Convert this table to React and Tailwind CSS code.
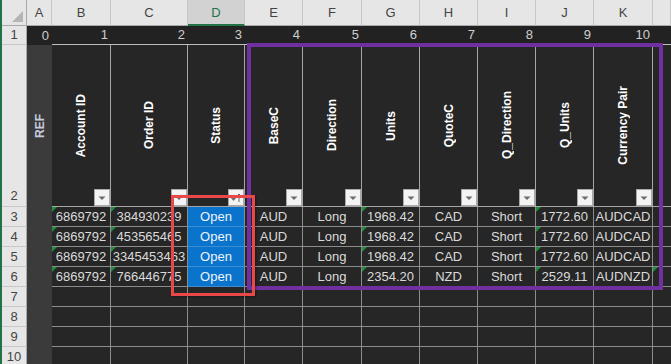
import React from "react";

const LETTERS = ["A", "B", "C", "D", "E", "F", "G", "H", "I", "J", "K", ""];
const HEADS = ["Account ID", "Order ID", "Status", "BaseC", "Direction", "Units", "QuoteC", "Q_Direction", "Q_Units", "Currency Pair"];
const ROWS = [
  ["6869792", "384930239", "Open", "AUD", "Long", "1968.42", "CAD", "Short", "1772.60", "AUDCAD"],
  ["6869792", "453565465", "Open", "AUD", "Long", "1968.42", "CAD", "Short", "1772.60", "AUDCAD"],
  ["6869792", "3345453463", "Open", "AUD", "Long", "1968.42", "CAD", "Short", "1772.60", "AUDCAD"],
  ["6869792", "766446775", "Open", "AUD", "Long", "2354.20", "NZD", "Short", "2529.11", "AUDNZD"],
];
// columns (index into B..K) that carry the green "number stored as text" marker
const FLAGGED = [0, 1, 5, 8];

function Flag() {
  return <span className="absolute left-0 top-0 h-0 w-0 border-t-[5px] border-r-[5px] border-t-[#1f8f3c] border-r-transparent" />;
}

function FilterBtn({ sorted }) {
  return (
    <div className="absolute bottom-0 right-0 h-[17px] w-[16px] border border-[#a9a9a9] bg-[#f3f3f3]">
      <svg width="14" height="15" viewBox="0 0 14 15">
        {sorted ? (
          <>
            <polygon points="2,8 7,8 4.5,11" fill="#6b6b6b" />
            <line x1="10" y1="4" x2="10" y2="12" stroke="#6b6b6b" strokeWidth="1" />
            <polyline points="8.2,6 10,4 11.8,6" fill="none" stroke="#6b6b6b" strokeWidth="1" />
          </>
        ) : (
          <polygon points="3.5,6.5 10.5,6.5 7,10" fill="#6b6b6b" />
        )}
      </svg>
    </div>
  );
}

function RowHead({ n, bottom }) {
  return (
    <div className={`flex justify-center border-b border-r border-b-[#c8c8c8] border-r-[#a9a9a9] bg-[#e6e6e6] text-[13px] text-[#444] ${bottom ? "items-end pb-[1px]" : "items-center"}`}>
      {n}
    </div>
  );
}

export default function App() {
  return (
    <div className="relative h-[364px] w-[671px] overflow-hidden border-l-2 border-[#217346] bg-[#262626] font-['Liberation_Sans',Arial,sans-serif]">
      <div className="grid grid-cols-[25px_25px_59px_77px_57px_58px_59px_58px_58px_58px_58px_59px_18px] grid-rows-[26px_19px_162px_repeat(8,20px)]">
        {/* column letters */}
        <div className="relative border-b border-r border-[#a9a9a9] bg-[#e6e6e6]">
          <span className="absolute bottom-[3px] right-[3px] h-0 w-0 border-b-[11px] border-l-[11px] border-b-[#b5b5b5] border-l-transparent" />
        </div>
        {LETTERS.map((l, i) =>
          l === "D" ? (
            <div key={i} className="flex items-center justify-center border-b-2 border-r border-b-[#217346] border-r-[#c8c8c8] bg-[#d2d2d2] pt-[2px] text-[13px] text-[#217346]">
              {l}
            </div>
          ) : (
            <div key={i} className="flex items-center justify-center border-b border-r border-b-[#a9a9a9] border-r-[#c8c8c8] bg-[#e6e6e6] text-[13px] text-[#444]">
              {l}
            </div>
          )
        )}

        {/* row 1: index numbers */}
        <RowHead n="1" />
        {LETTERS.map((_, i) => (
          <div key={i} className={`flex items-center justify-end bg-[#222] pr-[3px] text-[13px] text-[#cfcfcf] ${i === 0 ? "" : "border-b border-[#bdbdbd]"}`}>
            {i < 11 ? i : ""}
          </div>
        ))}

        {/* row 2: rotated headers */}
        <RowHead n="2" bottom />
        <div className="flex items-center justify-center bg-[#3b3b3b]">
          <span className="rotate-180 whitespace-nowrap text-[12px] font-bold text-[#c3cbdd] [writing-mode:vertical-rl]">REF</span>
        </div>
        {HEADS.map((h, i) => (
          <div key={h} className="relative flex items-center justify-center border-b border-r border-[#a6a6a6] bg-[#262626]">
            <span className="rotate-180 whitespace-nowrap text-[12px] font-bold text-white [writing-mode:vertical-rl]">{h}</span>
            <FilterBtn sorted={i === 2} />
          </div>
        ))}
        <div className="border-b border-[#a6a6a6] bg-[#262626]" />

        {/* rows 3 to 10 */}
        {Array.from({ length: 8 }).map((_, r) => {
          const data = ROWS[r];
          return (
            <React.Fragment key={r}>
              <RowHead n={r + 3} />
              <div className="bg-[#3b3b3b]" />
              {Array.from({ length: 10 }).map((_, c) =>
                data && c === 2 ? (
                  <div key={c} className="flex items-center justify-center border-b border-r border-b-[#3d8bd0] border-r-[#8c8c8c] bg-[#0a74cc] text-[13px] text-[#eef3f9]">
                    {data[c]}
                  </div>
                ) : (
                  <div key={c} className="relative flex items-center justify-center border-b border-r border-[#8c8c8c] pt-[1px] text-[13px] text-[#dadada]">
                    {data && FLAGGED.includes(c) && <Flag />}
                    {data ? data[c] : ""}
                  </div>
                )
              )}
              <div className="relative border-b border-[#8c8c8c]">{r === 3 && <Flag />}</div>
            </React.Fragment>
          );
        })}
      </div>

      {/* annotation boxes */}
      <div className="pointer-events-none absolute left-[245px] top-[43px] h-[247px] w-[416px] border-[4px] border-[#7030a0]" />
      <div className="pointer-events-none absolute left-[169px] top-[195px] h-[101px] w-[84px] border-[3px] border-[#e84848] shadow-[1px_1px_2px_rgba(0,0,0,0.35)]" />
    </div>
  );
}
